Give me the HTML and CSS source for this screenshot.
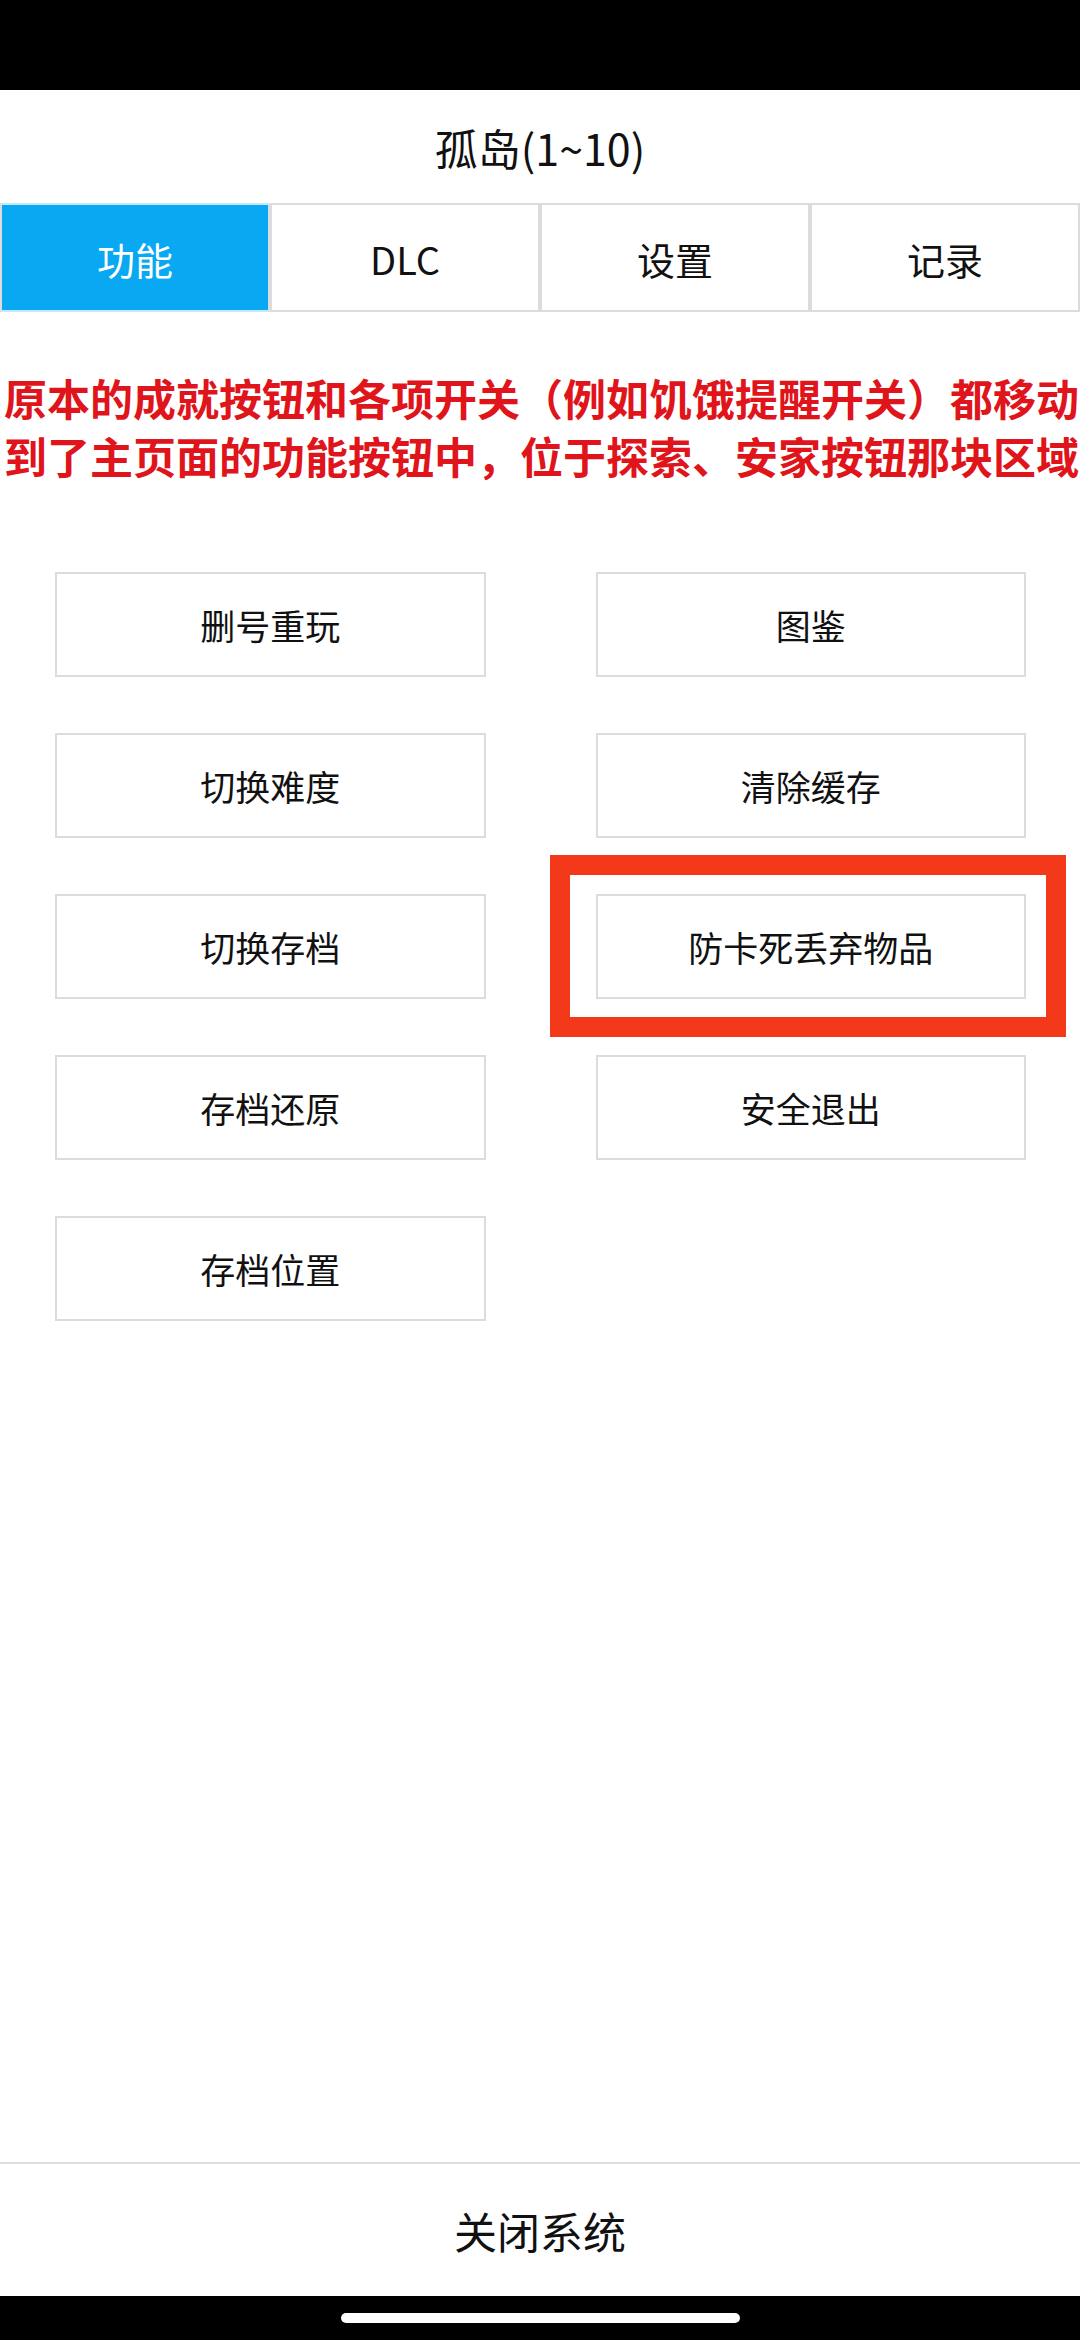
FILE: index.html
```html
<!DOCTYPE html>
<html lang="zh-CN">
<head>
<meta charset="utf-8">
<title>孤岛(1~10)</title>
<link rel="stylesheet" href="styles.css">
</head>
<body>
<div class="screen">
  <div class="status-bar"></div>
  <header class="header">孤岛(1~10)</header>
  <nav class="tabs">
    <div class="tab active">功能</div>
    <div class="tab">DLC</div>
    <div class="tab">设置</div>
    <div class="tab">记录</div>
  </nav>
  <main class="main">
    <p class="notice"><span class="line">原本的成就按钮和各项开关（例如饥饿提醒开关）都移动</span><span class="line">到了主页面的功能按钮中，位于探索、安家按钮那块区域</span></p>
    <div class="grid">
      <div class="btn">删号重玩</div>
      <div class="btn">图鉴</div>
      <div class="btn">切换难度</div>
      <div class="btn">清除缓存</div>
      <div class="btn">切换存档</div>
      <div class="btn marked">防卡死丢弃物品<span class="highlight"></span></div>
      <div class="btn">存档还原</div>
      <div class="btn">安全退出</div>
      <div class="btn">存档位置</div>
    </div>
  </main>
  <footer class="footer">关闭系统</footer>
  <div class="home-bar"><span class="pill"></span></div>
</div>
</body>
</html>
```

FILE: styles.css
```css
* {
  box-sizing: border-box;
}

html, body {
  margin: 0;
  padding: 0;
  background: #ffffff;
}

body {
  font-family: "Noto Sans CJK SC", "Noto Sans", sans-serif;
  color: #111111;
}

.screen {
  width: 1080px;
  height: 2340px;
  display: flex;
  flex-direction: column;
  overflow: hidden;
}

.status-bar {
  height: 90px;
  background: #000000;
  flex: none;
}

.header {
  height: 113px;
  flex: none;
  display: flex;
  align-items: center;
  justify-content: center;
  font-size: 43px;
  color: #111111;
}

.tabs {
  height: 109px;
  flex: none;
  display: grid;
  grid-template-columns: repeat(4, 1fr);
}

.tab {
  border: 2px solid #dcdcdc;
  display: flex;
  align-items: center;
  justify-content: center;
  font-size: 38px;
  color: #111111;
  padding-top: 2px;
}

.tab.active {
  background: #08a8f2;
  color: #ffffff;
  border-top-color: #c4e9fb;
  border-bottom-color: #c4e9fb;
}

.main {
  flex: 1;
}

.notice {
  margin: 0;
  padding: 56px 0 0 4px;
  font-size: 43px;
  line-height: 58px;
  font-weight: 700;
  color: #e0141b;
}

.notice .line {
  display: block;
  white-space: nowrap;
}

.grid {
  margin-top: 88px;
  padding: 0 54px 0 55px;
  display: grid;
  grid-template-columns: 1fr 1fr;
  grid-auto-rows: 105px;
  column-gap: 110px;
  row-gap: 56px;
}

.btn {
  border: 2px solid #dcdcdc;
  display: flex;
  align-items: center;
  justify-content: center;
  font-size: 35px;
  color: #111111;
}

.marked {
  position: relative;
}

.highlight {
  position: absolute;
  left: -48px;
  right: -42px;
  top: -41px;
  bottom: -40px;
  border: 20px solid #f4381a;
  pointer-events: none;
}

.footer {
  height: 134px;
  flex: none;
  border-top: 2px solid #dedede;
  display: flex;
  align-items: center;
  justify-content: center;
  font-size: 43px;
  color: #111111;
}

.home-bar {
  height: 44px;
  flex: none;
  background: #000000;
  display: flex;
  justify-content: center;
  padding-top: 17px;
}

.pill {
  width: 399px;
  height: 10px;
  border-radius: 5px;
  background: #ffffff;
}
```
